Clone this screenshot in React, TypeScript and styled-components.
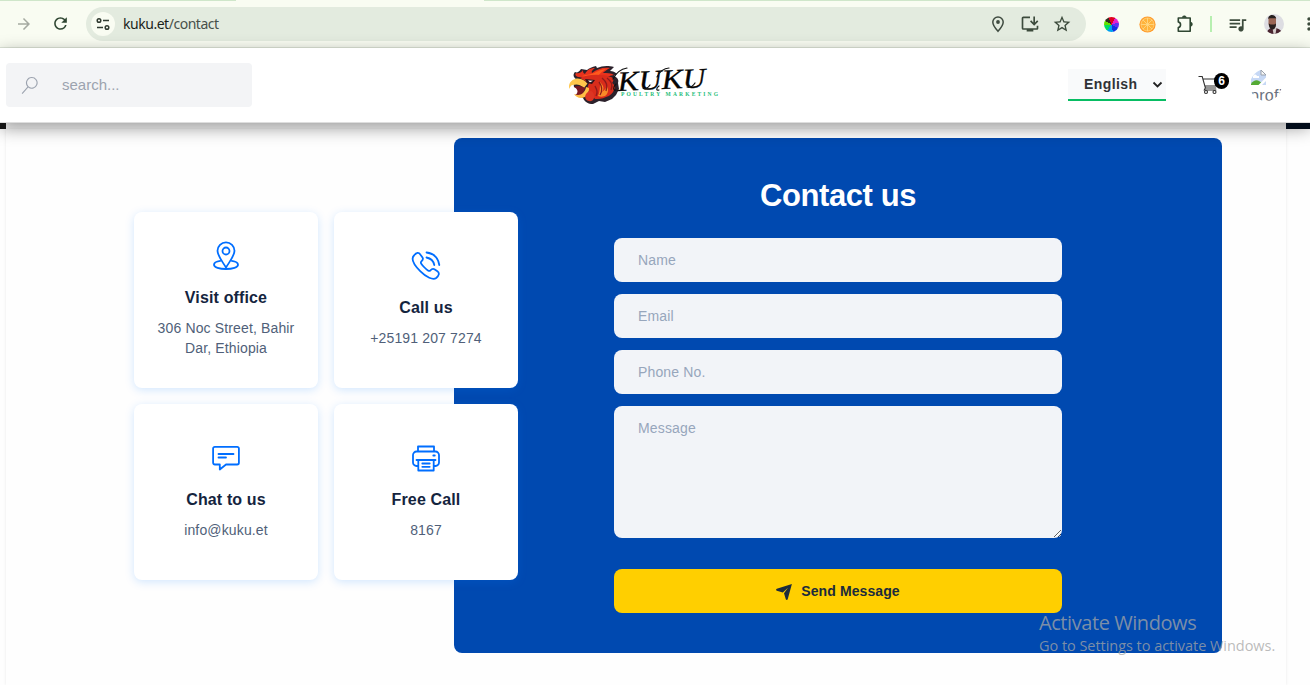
import React from "react";
import styled, { createGlobalStyle } from "styled-components";
import { MdInstallDesktop, MdQueueMusic, MdRefresh, MdStarBorder, MdArrowForward, MdMoreVert } from "react-icons/md";
import { VscSearch } from "react-icons/vsc";

const Global = createGlobalStyle`
  *, *::before, *::after { box-sizing: border-box; }
  html, body { margin: 0; height: 685px; overflow: hidden; background: #fff; }
  body { font-family: "Liberation Sans", Arial, sans-serif; }
`;

const Screen = styled.div`
  position: relative;
  width: 1310px;
  height: 685px;
  overflow: hidden;
  display: flex;
  flex-direction: column;
  background: #fefefe;
`;

/* Browser chrome */

const BrowserBar = styled.div`
  position: relative;
  flex: none;
  height: 48px;
  display: flex;
  align-items: center;
  background: #f9fcf2;
  border-bottom: 1px solid #dfe6d9;
  color: #3c4b3c;
`;

const TabEdge = styled.div<{ $from: number; $width: number }>`
  position: absolute;
  top: 0;
  left: ${(p) => p.$from}px;
  width: ${(p) => p.$width}px;
  height: 1px;
  background: #cfe6ca;
`;

const NavButton = styled.span<{ $tone: string; $left: number }>`
  display: flex;
  flex: none;
  margin-left: ${(p) => p.$left}px;
  color: ${(p) => p.$tone};
`;

const AddressBar = styled.div`
  display: flex;
  flex: none;
  align-items: center;
  width: 1000px;
  height: 34px;
  margin-left: 16px;
  padding: 0 14px 0 5px;
  border-radius: 17px;
  background: #e3ebdf;
`;

const SiteBadge = styled.span`
  display: flex;
  align-items: center;
  justify-content: center;
  width: 24px;
  height: 24px;
  border-radius: 50%;
  background: #f9fcf2;
`;

const Url = styled.span`
  flex: 1;
  margin: 1px 0 0 8px;
  font: 14px/20px "Noto Sans", sans-serif;
  letter-spacing: -0.47px;
  color: #47504a;
  b { font-weight: 400; color: #1b1f1b; }
`;

const AddressActions = styled.span`
  display: flex;
  align-items: center;
  gap: 12px;
`;

const Extensions = styled.div`
  display: flex;
  flex: none;
  align-items: center;
  margin: 1px 0 0 18px;
`;

const ExtensionSlot = styled.span<{ $gap?: number }>`
  display: flex;
  margin-right: ${(p) => p.$gap ?? 0}px;
`;

const ColorWheel = styled.span`
  width: 15px;
  height: 15px;
  border-radius: 50%;
  background: conic-gradient(#e00020 0 30deg, #e020d0 30deg 75deg, #6030f0 75deg 120deg, #1030e0 120deg 170deg, #00a0f0 170deg 215deg, #00e060 215deg 270deg, #60e000 270deg 300deg, #303020 300deg 335deg, #e00020 335deg);
`;

const Divider = styled.span`
  width: 2px;
  height: 16px;
  background: #b7efb0;
`;

/* Site header */

const Header = styled.header`
  position: relative;
  z-index: 2;
  flex: none;
  display: flex;
  align-items: center;
  height: 75px;
  padding-left: 6px;
  background: #fff;
  border-bottom: 1px solid #dedede;
  box-shadow: 0 5px 16px rgba(0, 0, 0, 0.4);
  > * { flex: none; }
`;

const SearchBox = styled.label`
  display: flex;
  align-items: center;
  width: 246px;
  height: 44px;
  padding-left: 15px;
  border-radius: 4px;
  background: #f3f4f6;
  color: #9ca3af;
`;

const SearchInput = styled.input`
  width: 160px;
  margin-left: 24px;
  padding: 0;
  border: 0;
  outline: 0;
  background: transparent;
  font: 15px/20px "Liberation Sans", Arial, sans-serif;
  &::placeholder { color: #9ca3af; opacity: 1; }
`;

const LogoLink = styled.a`
  display: flex;
  margin-left: 316px;
`;

const LanguagePicker = styled.button`
  display: flex;
  align-items: center;
  justify-content: space-between;
  width: 98px;
  height: 32px;
  margin: 0 0 1px 348px;
  padding: 0 3px 0 16px;
  border: 0;
  border-bottom: 2px solid #08bd63;
  background: #f9fafb;
  color: #303236;
  font: 700 14px/20px "Liberation Sans", Arial, sans-serif;
  letter-spacing: 0.4px;
  svg { margin-top: 2px; }
`;

const Cart = styled.div`
  position: relative;
  display: flex;
  width: 32px;
  height: 22px;
  margin-left: 32px;
`;

const CartCount = styled.span`
  position: absolute;
  top: -1px;
  left: 16px;
  width: 15px;
  height: 16px;
  border-radius: 8px;
  background: #000;
  color: #fff;
  font-size: 12px;
  font-weight: 700;
  line-height: 16px;
  text-align: center;
`;

const Avatar = styled.div`
  width: 32px;
  height: 32px;
  margin-left: 20px;
  border-radius: 50%;
  overflow: hidden;
  color: #6b7280;
  font-size: 16px;
  line-height: 20px;
  letter-spacing: 0.3px;
  svg { display: block; }
  span { display: block; }
`;

/* Contact section */

const Backdrop = styled.div`
  height: 6px;
  flex: none;
  display: flex;
  justify-content: space-between;
  background: #fff;
`;

const BackdropEdge = styled.span<{ $width: number; $tone: string }>`
  position: relative;
  z-index: 3;
  width: ${(p) => p.$width}px;
  background: ${(p) => p.$tone};
`;

const Page = styled.main`
  flex: 1;
  width: 1280px;
  margin-left: 6px;
  padding: 9px 64px 0 128px;
  background: #fefefe;
  box-shadow: 0 0 3px rgba(0, 0, 0, 0.09);
  display: flex;
  align-items: flex-start;
`;

const CardGrid = styled.section`
  position: relative;
  z-index: 1;
  display: grid;
  grid-template-columns: 184px 184px;
  grid-auto-rows: 176px;
  gap: 16px;
  margin: 74px -64px 0 0;
`;

const Card = styled.article`
  display: flex;
  flex-direction: column;
  align-items: center;
  justify-content: center;
  padding: 0 16px 3px;
  border-radius: 8px;
  background: #fff;
  box-shadow: 0 2px 10px rgba(0, 120, 255, 0.18);
  text-align: center;
  svg { display: block; }
`;

const CardTitle = styled.h3`
  margin: 15px 0 9px;
  font-size: 16px;
  line-height: 22px;
  letter-spacing: 0.14px;
  color: #14243e;
`;

const CardText = styled.p`
  margin: 0;
  font-size: 14px;
  line-height: 20px;
  letter-spacing: 0.14px;
  color: #505f79;
`;

const Panel = styled.section`
  width: 768px;
  height: 515px;
  padding: 40px 160px 0;
  border-radius: 8px;
  background: #0049b0;
`;

const PanelTitle = styled.h2`
  margin: 0 0 24px;
  font-size: 31px;
  line-height: 36px;
  letter-spacing: -0.4px;
  text-align: center;
  color: #fff;
`;

const Form = styled.form`
  display: flex;
  flex-direction: column;
  gap: 12px;
`;

const Field = styled.input`
  height: 44px;
  padding: 0 24px;
  border: 0;
  border-radius: 8px;
  background: #f2f4f8;
  font: 14px/20px "Liberation Sans", Arial, sans-serif;
  letter-spacing: 0.15px;
  &::placeholder { color: #97a6bc; opacity: 1; }
`;

const MessageField = styled(Field)`
  display: block;
  height: 132px;
  padding: 12px 24px;
  resize: vertical;
`;

const SendButton = styled.button`
  display: flex;
  align-items: center;
  justify-content: center;
  gap: 9px;
  height: 44px;
  margin-top: 19px;
  padding: 0;
  border: 0;
  border-radius: 8px;
  background: #ffcf00;
  color: #1c2b3c;
  font: 700 14px/20px "Liberation Sans", Arial, sans-serif;
  letter-spacing: 0.1px;
  svg { margin-top: 2px; }
`;

const Watermark = styled.div`
  position: absolute;
  z-index: 5;
  left: 1039px;
  top: 610px;
  font-family: "Open Sans", sans-serif;
  color: rgba(165, 165, 165, 0.76);
  white-space: nowrap;
`;

const WatermarkTitle = styled.div`
  font-size: 20px;
  line-height: 26px;
  letter-spacing: -0.43px;
`;

const WatermarkText = styled.div`
  font-size: 14.5px;
  line-height: 20px;
  letter-spacing: -0.04px;
`;

const SettingsGlyph = () => (
  <svg width="14" height="14" viewBox="0 0 14 14" fill="none" stroke="#2f3a30" strokeWidth="1.5">
    <circle cx="3" cy="3.5" r="1.8" />
    <path d="M7 3.5h6M1 10.5h6" />
    <circle cx="11" cy="10.5" r="1.8" />
  </svg>
);

const PinGlyph = () => (
  <svg width="20" height="20" viewBox="0 0 20 20" fill="none" stroke="#3f4b40" strokeWidth="1.5">
    <path d="M10 17.3C6.8 13.9 4.8 11.1 4.8 8.1a5.2 5.2 0 0 1 10.4 0c0 3-2 5.8-5.2 9.2z" />
    <circle cx="10" cy="8" r="1.9" fill="#3f4b40" stroke="none" />
  </svg>
);

const OrangeGlyph = () => (
  <svg width="17" height="17" viewBox="0 0 17 17">
    <circle cx="8.5" cy="8.5" r="8.1" fill="#ff9d2c" />
    <circle cx="8.5" cy="8.5" r="6.5" fill="#ffb33c" stroke="#ffd27c" strokeWidth=".8" />
    <path d="M8.5 2v13M2 8.5h13M3.9 3.9l9.2 9.2M13.1 3.9l-9.2 9.2" stroke="#ffda8c" strokeWidth=".8" />
  </svg>
);

const PuzzleGlyph = () => (
  <svg width="18" height="18" viewBox="0 0 18 18" fill="none" stroke="#2f4632" strokeWidth="1.6" strokeLinejoin="round">
    <path d="M2.3 3h11.9v13.2H2.3v-3.7c3-.6 3-5 0-5.6z" />
    <path d="M6.3 2.5a2 1.7 0 0 1 4 0zM14.7 7.2a1.7 2 0 0 1 0 4z" fill="#2f4632" strokeWidth=".6" />
  </svg>
);

const ProfileGlyph = () => (
  <svg width="20" height="20" viewBox="0 0 20 20">
    <defs><clipPath id="profile"><circle cx="10" cy="10" r="10" /></clipPath></defs>
    <g clipPath="url(#profile)">
      <rect width="20" height="20" fill="#dddde2" />
      <path d="M3 20c0-4 2-5 4-6h5c4 1 6 3 6 6z" fill="#4a2630" />
      <path d="M8.5 14h4l-1 6h-2z" fill="#d4cccb" />
      <path d="M4.500 5c0-4 7-4.500 7.500 0v4.500c0 4-2 5.500-3.500 5.500s-4-2-4-5.500z" fill="#9a6655" />
      <path d="M4.200 5c-.2-5.500 8-5 8 0l-.7-.8h-6zM4.800 9.500l1.700 1h3.800l1.700-1c0 4-1.500 6-3.500 6s-3.700-2-3.700-6z" fill="#27201f" />
    </g>
  </svg>
);

const Logo = () => (
  <svg width="152" height="42" viewBox="0 0 152 42">
    {/* dark outline of the rooster's head and neck */}
    <path d="M8 15c-3-2-3-5-1-7 2 1 4 0 6-3l6 1c2-2 5-3 9-4l1 2c5-2 10-3 17-1l-4 4c3 0 5 1 7 3l-3 2c4 2 5 4 4 7l1 6-3 6-4 4-7 3-6-1-6 3c-5 0-8-2-10-6l-6-3 2-6-5-2c-1-4 2-7 8-8z" fill="#2c222c" />
    {/* comb */}
    <path d="M10 13c-3-1-3-3-2-4 3 1 6-1 7-3 0 2 0 3 2 4 2-4 5-6 10-6-3 2-4 4-3 5 5-4 11-6 18-5-4 2-6 4-7 5 4 0 8 0 11 2-5 1-9 2-11 4z" fill="#e8321d" />
    <path d="M14 12c6-2 9-1 14-4 4-2 7-3 10-3-4 2-6 5-8 7-5 2-11 2-16 0z" fill="#ff5a1d" />
    {/* neck feathers */}
    <path d="M12 14c8-4 22-4 31-1 3 1 3 4 1 6 3 2 4 5 2 7-1 3-4 6-8 7-4 2-8 2-11 2l-8-10 2-6z" fill="#d92c1b" />
    <path d="M32 18c3 3 5 6 2 10 3-2 4-4 5-6 2 4 1 8-2 10-3 1-5 1-7 0 2-4 2-9 2-14z" fill="#f98a27" />
    <path d="M34 14c5 4 6 8 4 13M39 14c5 4 6 7 4 12M31 18c3 4 4 8 1 13M27 22c2 4 3 6 1 10" fill="none" stroke="#8e1b1b" strokeWidth="1.3" />
    {/* beak and open mouth */}
    <path d="M1.500 25c-1.500-5 1-9 7-10.500 5-.5 8 2 11 5L16 24c-4-4-8-4-11-3-2 0-3 2-3.500 4z" fill="#ffc74c" />
    <path d="M6 23c5-2 8-1 11 1l-2 6c-2 2-5 2-8 1 4-2 3-6-1-8z" fill="#7b1922" />
    <path d="M6 30c6 3 11-1 12-7l3 1c0 6-3 10-8 10-3 0-6-2-7-4z" fill="#ffbd45" />
    <path d="M18 30c3-4 7-4 8 1 1 4-2 7-5 6-3 0-5-4-3-7z" fill="#dc3523" />
    <path d="M17 15l10 1-3 4-5-1z" fill="#30131b" />
    <path d="M20 16.500l5 .3-3 1.500z" fill="#fff" />
    {/* wordmark */}
    <text x="50" y="27" transform="rotate(-2.500 50 27)" fontFamily="Liberation Serif, serif" fontStyle="italic" fontSize="28" fill="#050505" stroke="#050505" strokeWidth=".3" textLength="88" lengthAdjust="spacingAndGlyphs">KUKU</text>
    <path d="M45 15c3-6 8-10 14-11M48 26c-3 1-3-3 0-6M89 13c2-5 7-9 12-9M91 26c-3 1-3-2 0-4M75 24c2 2 5 0 7-3M119 23c3 1 6-1 8-4" fill="none" stroke="#111" strokeWidth="1.200" strokeLinecap="round" />
    <text x="53" y="31.500" fontFamily="Liberation Serif, serif" fontSize="5.500" fontWeight="700" fill="#23bd78" textLength="97" lengthAdjust="spacing">POULTRY MARKETING</text>
  </svg>
);

const CartGlyph = () => (
  <svg width="22" height="22" viewBox="0 0 22 22" fill="none" stroke="#303030" strokeWidth="1.1">
    <path d="M.5 2.500h3.700l3.200 11.500h10.800M5 5h14.500l-2 7H7M7.300 14l-1 2h12" />
    <circle cx="8" cy="18" r="1.500" /><circle cx="16.500" cy="18" r="1.500" />
  </svg>
);

const BrokenImage = () => (
  <svg width="17" height="17" viewBox="0 0 17 17">
    <path d="M1 3.500L4 1h7l5 4.500V16H1z" fill="#c6d8f5" />
    <path d="M3 7c1-2 3-2 4 0h2v2H3z" fill="#fff" />
    <path d="M1 15c3-5 8-5 11 0v1H1z" fill="#54aa35" />
    <path d="M8 16.500l9-9v3.500l-5.500 5.500z" fill="#fff" />
    <path d="M11 1v5h5z" fill="#f7f7f7" stroke="#9aa2ad" />
  </svg>
);

type IconName = "pin" | "phone" | "chat" | "printer";

const paths: Record<IconName, React.ReactNode> = {
  pin: <><path d="M16 27.500C12 21 7.500 15.700 7.500 10.800a8.500 8.500 0 0 1 17 0c0 4.900-4.500 10.200-8.500 16.700z" /><circle cx="16" cy="11" r="3.500" /><path d="M10.200 20.900c-3.600.5-6.200 2-6.200 3.800 0 2.500 5.400 4.300 12 4.300s12-1.800 12-4.300c0-1.800-2.600-3.300-6.200-3.800" /></>,
  phone: <><path d="M4 5.500c2.500-3.300 4.700-3.500 6.500-.8l2 2.800c1.200 1.700-.1 3.100-1.300 4.200-1.100 1 .7 3.100 3.300 5.800 2.700 2.700 4.600 4.200 5.700 3.100 1.200-1.300 2.500-2.400 4.200-1.300l3 2c2.500 1.700 1.600 4.300-1.200 6.700-3.200 2.300-10-.7-16-6.800S.7 8.800 4 5.500z" /><path d="M16.500 2.500c7.200 1 11.800 5.500 12.800 12.500M16.500 7.500c4.500 1 7 3.500 7.800 7.500" /></>,
  chat: <><path d="M4.800 4.800h22.400a1.700 1.700 0 0 1 1.700 1.700v14.300a1.700 1.700 0 0 1-1.700 1.700H16l-6.200 5v-5H4.800a1.700 1.700 0 0 1-1.700-1.700V6.500a1.700 1.700 0 0 1 1.700-1.700z" /><path d="M8.500 12h15M8.500 15.500h7.500" /></>,
  printer: <><path d="M8 9.500V4.500h16v5M8.300 24H6.500a3.500 3.500 0 0 1-3.500-3.500V13A3.500 3.500 0 0 1 6.500 9.500h19A3.500 3.500 0 0 1 29 13v7.500a3.500 3.500 0 0 1-3.500 3.500h-1.800M6.500 18h19M8.300 18v10.500h15.400V18M12.300 21.500h7.400M12.300 24.800h7.400M23.300 13.500h1.500" /></>,
};

const CardIcon = ({ name }: { name: IconName }) => (
  <svg width="32" height="32" viewBox="0 0 32 32" fill="none" stroke="#006eff" strokeWidth="1.8" strokeLinecap="round" strokeLinejoin="round">
    {paths[name]}
  </svg>
);

const contacts: { icon: IconName; title: string; text: string }[] = [
  { icon: "pin", title: "Visit office", text: "306 Noc Street, Bahir Dar, Ethiopia" },
  { icon: "phone", title: "Call us", text: "+25191 207 7274" },
  { icon: "chat", title: "Chat to us", text: "info@kuku.et" },
  { icon: "printer", title: "Free Call", text: "8167" },
];

export default function App() {
  return (
    <Screen>
      <Global />
      <BrowserBar>
        <TabEdge $from={0} $width={236} />
        <TabEdge $from={484} $width={826} />
        <NavButton $tone="#a5aaa1" $left={15}><MdArrowForward size={18} /></NavButton>
        <NavButton $tone="#2f4632" $left={18}><MdRefresh size={19} /></NavButton>
        <AddressBar>
          <SiteBadge><SettingsGlyph /></SiteBadge>
          <Url><b>kuku.et</b>/contact</Url>
          <AddressActions>
            <PinGlyph />
            <MdInstallDesktop size={20} />
            <MdStarBorder size={20} />
          </AddressActions>
        </AddressBar>
        <Extensions>
          <ExtensionSlot $gap={20}><ColorWheel /></ExtensionSlot>
          <ExtensionSlot $gap={20}><OrangeGlyph /></ExtensionSlot>
          <ExtensionSlot $gap={16}><PuzzleGlyph /></ExtensionSlot>
          <Divider />
          <ExtensionSlot $gap={15} />
          <ExtensionSlot $gap={16}><MdQueueMusic size={21} /></ExtensionSlot>
          <ExtensionSlot $gap={15}><ProfileGlyph /></ExtensionSlot>
          <ExtensionSlot><MdMoreVert size={20} /></ExtensionSlot>
        </Extensions>
      </BrowserBar>
      <Header>
        <SearchBox>
          <VscSearch size={17} />
          <SearchInput placeholder="search..." />
        </SearchBox>
        <LogoLink><Logo /></LogoLink>
        <LanguagePicker>
          English
          <svg width="11" height="8" viewBox="0 0 11 8" fill="none" stroke="#222" strokeWidth="1.8"><path d="M1.500 1.500l4 4 4-4" /></svg>
        </LanguagePicker>
        <Cart><CartGlyph /><CartCount>6</CartCount></Cart>
        <Avatar><BrokenImage /><span>profile</span></Avatar>
      </Header>
      <Backdrop>
        <BackdropEdge $width={6} $tone="#141414" />
        <BackdropEdge $width={24} $tone="#020d1a" />
      </Backdrop>
      <Page>
        <CardGrid>
          {contacts.map((c) => (
            <Card key={c.title}>
              <CardIcon name={c.icon} />
              <CardTitle>{c.title}</CardTitle>
              <CardText>{c.text}</CardText>
            </Card>
          ))}
        </CardGrid>
        <Panel>
          <PanelTitle>Contact us</PanelTitle>
          <Form>
            <Field placeholder="Name" />
            <Field placeholder="Email" />
            <Field placeholder="Phone No." />
            <MessageField as="textarea" placeholder="Message" />
            <SendButton type="button">
              <svg width="16" height="16" viewBox="0 0 16 16" fill="currentColor">
                <path d="M15.900 0L.8 4.800c-1 .4-1 1.600 0 2l6 1.700L12 3.700 8 9.300l1.800 6c.4.900 1.600.900 1.900 0z" />
              </svg>
              Send Message
            </SendButton>
          </Form>
        </Panel>
      </Page>
      <Watermark>
        <WatermarkTitle>Activate Windows</WatermarkTitle>
        <WatermarkText>Go to Settings to activate Windows.</WatermarkText>
      </Watermark>
    </Screen>
  );
}
